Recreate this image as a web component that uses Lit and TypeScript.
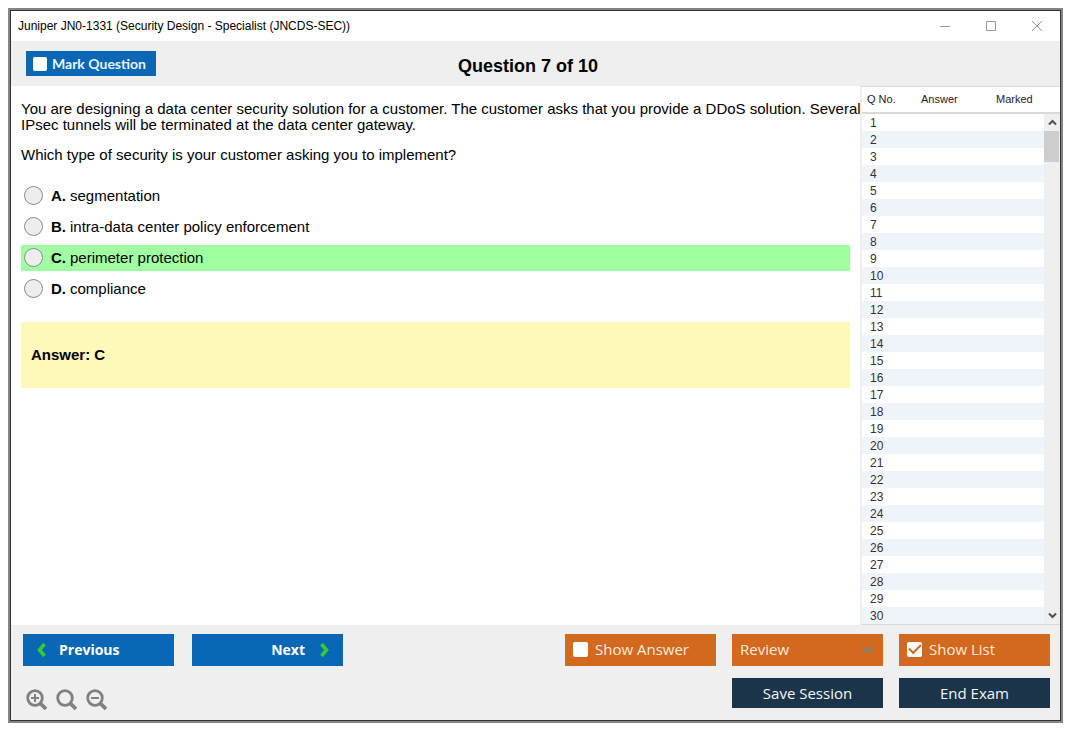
import { LitElement, html, css, svg } from "lit";
import { customElement, property, state } from "lit/decorators.js";

interface Choice {
  letter: string;
  text: string;
}

const CHOICES: Choice[] = [
  { letter: "A", text: "segmentation" },
  { letter: "B", text: "intra-data center policy enforcement" },
  { letter: "C", text: "perimeter protection" },
  { letter: "D", text: "compliance" },
];

@customElement("question-list")
class QuestionList extends LitElement {
  @property({ type: Number }) count = 30;

  static styles = css`
    :host {
      display: flex;
      flex-direction: column;
      box-sizing: border-box;
      min-height: 0;
      overflow: hidden;
      background: #fff;
      border-left: 2px solid #efefef;
      border-top: 1px solid #d9d9d9;
      border-bottom: 1px solid #d9d9d9;
      font: 12px/15px "Liberation Sans", Arial, sans-serif;
      color: #333;
    }
    .body {
      display: flex;
      flex: 1;
      min-height: 0;
    }
    .rows {
      flex: 1;
      overflow: hidden;
    }
    table {
      width: 100%;
      border-collapse: separate;
      border-spacing: 0;
      table-layout: fixed;
    }
    .q {
      width: 49px;
    }
    .a {
      width: 70px;
    }
    th {
      height: 25px;
      padding: 0 0 0 5px;
      font-size: 11px;
      font-weight: 400;
      text-align: left;
      color: #222;
      border-bottom: 2px solid #d9d9d9;
    }
    td {
      padding: 2px 0 0 8px;
      height: 15px;
    }
    tbody tr:nth-child(even) {
      background: #eef4f9;
    }
    .scroll {
      display: flex;
      flex-direction: column;
      width: 16px;
      margin-top: 25px;
      border-top: 2px solid #d9d9d9;
      background: #efefef;
    }
    .arrow {
      display: grid;
      place-items: center;
      height: 17px;
      padding: 0;
      border: 0;
      background: none;
    }
    .thumb {
      height: 31px;
      margin-right: 1px;
      background: #cdcdcd;
    }
    .track {
      flex: 1;
    }
  `;

  render() {
    const rows = Array.from({ length: this.count }, (_, i) => i + 1);
    return html`
      <div class="body">
        <div class="rows">
          <table>
            <thead>
              <tr>
                <th class="q" scope="col">Q No.</th>
                <th class="a" scope="col">Answer</th>
                <th scope="col">Marked</th>
              </tr>
            </thead>
            <tbody>
              ${rows.map((n) => html`<tr><td>${n}</td><td></td><td></td></tr>`)}
            </tbody>
          </table>
        </div>
        <div class="scroll">
          <button class="arrow" aria-label="Scroll up">
            <svg width="9" height="7" viewBox="0 0 9 7" fill="none" stroke="#505050" stroke-width="2"><path d="M1 5.5 4.5 2 8 5.5" /></svg>
          </button>
          <div class="thumb"></div>
          <div class="track"></div>
          <button class="arrow" aria-label="Scroll down">
            <svg width="9" height="7" viewBox="0 0 9 7" fill="none" stroke="#505050" stroke-width="2"><path d="M1 1.5 4.5 5 8 1.5" /></svg>
          </button>
        </div>
      </div>
    `;
  }
}

@customElement("app-root")
class AppRoot extends LitElement {
  @state() private showList = true;
  @state() private answer = "C";

  static styles = css`
    :host {
      display: block;
      box-sizing: border-box;
      height: 100vh;
      padding: 8px 12px 12px 8px;
      background: #fff;
      color: #000;
      font-family: "Liberation Sans", Arial, sans-serif;
    }
    * {
      box-sizing: border-box;
    }
    .frame {
      height: 100%;
      border: 2px solid #858585;
    }
    .window {
      display: flex;
      flex-direction: column;
      height: 100%;
      border: 1px solid #333;
      background: #fff;
    }
    .titlebar {
      display: flex;
      align-items: center;
      justify-content: space-between;
      height: 30px;
      padding: 0 17px 0 7px;
      font-size: 12px;
      line-height: 16px;
    }
    .controls {
      display: flex;
      gap: 34px;
    }
    .control {
      display: block;
      padding: 0;
      border: 0;
      background: none;
      line-height: 0;
    }
    .header {
      display: grid;
      grid-template-columns: 1fr auto 1fr;
      align-items: center;
      height: 45px;
      padding: 0 30px 0 15px;
      background: #efefef;
    }
    h1 {
      margin: 0;
      padding-top: 4px;
      font-size: 18px;
      line-height: 22px;
    }
    .check {
      display: flex;
      align-items: center;
      gap: 7px;
      padding: 0 0 2px 8px;
    }
    .check input {
      appearance: none;
      display: grid;
      place-items: center;
      width: 15px;
      height: 15px;
      margin: 0;
      border-radius: 2px;
      background: #fff;
    }
    .check input:checked::after {
      content: "";
      width: 10px;
      height: 5px;
      margin-bottom: 3px;
      border: solid #d2691e;
      border-width: 0 0 2px 2px;
      transform: rotate(-45deg);
    }
    .mark {
      justify-self: start;
      width: 130px;
      height: 25px;
      gap: 5px;
      padding: 0 0 0 7px;
      background: #0a67b5;
      color: #e8f1fa;
      font: 700 14px/20px Lato, sans-serif;
    }
    .mark input {
      width: 14px;
      height: 14px;
    }
    .main {
      display: grid;
      grid-template-columns: minmax(0, 1fr) 200px;
      flex: 1;
      min-height: 0;
    }
    .main.wide {
      grid-template-columns: minmax(0, 1fr);
    }
    .question {
      padding: 15px 0 0 10px;
      font-size: 15px;
      line-height: 16px;
    }
    p {
      margin: 0 -2px 14px 0;
    }
    .choices {
      display: grid;
      gap: 5px;
      margin: 20px 10px 0 0;
      padding: 0;
      border: 0;
    }
    .choice {
      display: flex;
      align-items: center;
      height: 26px;
      padding-left: 3px;
    }
    .choice.correct {
      background: #a0ffa0;
    }
    .choice input {
      appearance: none;
      width: 19px;
      height: 19px;
      margin: 0 8px 1px 0;
      border: 1px solid #8a8a8a;
      border-radius: 50%;
      background: #ededed;
    }
    .choice input:checked {
      background: radial-gradient(#333 4px, #ededed 5px);
    }
    .choice b {
      margin-right: 4px;
    }
    .answer {
      margin: 20px 10px 0 0;
      padding: 25px 10px;
      background: #fef8b9;
      font-weight: 700;
    }
    .footer {
      display: flex;
      justify-content: space-between;
      padding: 9px 10px 12px 12px;
      background: #efefef;
    }
    .nav,
    .actions {
      display: grid;
      grid-template-rows: 32px 30px;
      row-gap: 12px;
    }
    .nav {
      grid-template-columns: 151px 151px;
      column-gap: 18px;
    }
    .actions {
      grid-template-columns: repeat(3, 151px);
      column-gap: 16px;
    }
    .btn {
      border: 0;
      font: 400 15px/20px "Open Sans", sans-serif;
      color: #fbe9dc;
    }
    .blue {
      display: flex;
      align-items: center;
      gap: 13px;
      padding: 0 14px;
      background: #0a67b5;
      color: #fff;
      font-size: 14px;
      font-weight: 700;
    }
    .next {
      justify-content: flex-end;
      gap: 15px;
    }
    .orange {
      background: #d2691e;
    }
    .review {
      display: flex;
      align-items: center;
      justify-content: space-between;
      padding: 0 9px 2px 8px;
    }
    .navy {
      padding: 0;
      background: #1b344a;
      color: #f4f6f8;
    }
    .save {
      grid-column: 2;
    }
    .zoom {
      display: flex;
      align-items: center;
      gap: 8px;
      padding: 14px 0 0 3px;
    }
  `;

  private magnifier(label: string, mark: unknown) {
    return html`
      <button class="control" aria-label=${label}>
        <svg width="22" height="22" viewBox="0 0 22 22" fill="none" stroke="#808080">
          <circle cx="9" cy="9" r="7.3" stroke-width="2.8" />
          <path d="M14.3 14.3 20 20" stroke-width="3.8" />
          ${mark}
        </svg>
      </button>
    `;
  }

  render() {
    return html`
      <div class="frame">
        <div class="window">
          <div class="titlebar">
            <span>Juniper JN0-1331 (Security Design - Specialist (JNCDS-SEC))</span>
            <div class="controls">
              <button class="control" aria-label="Minimize">
                <svg width="12" height="12" stroke="#999" fill="none"><path d="M1 6.5h10" /></svg>
              </button>
              <button class="control" aria-label="Maximize">
                <svg width="12" height="12" stroke="#999" fill="none"><path d="M1.500 1.500h9v9h-9z" /></svg>
              </button>
              <button class="control" aria-label="Close">
                <svg width="12" height="12" stroke="#999" fill="none"><path d="m1 1 10 10M11 1 1 11" /></svg>
              </button>
            </div>
          </div>

          <div class="header">
            <label class="check mark"><input type="checkbox" />Mark Question</label>
            <h1>Question 7 of 10</h1>
          </div>

          <div class="main ${this.showList ? "" : "wide"}">
            <div class="question">
              <p>
                You are designing a data center security solution for a customer. The customer asks that you provide a
                DDoS solution. Several IPsec tunnels will be terminated at the data center gateway.
              </p>
              <p>Which type of security is your customer asking you to implement?</p>
              <fieldset class="choices" aria-label="Choices">
                ${CHOICES.map(
                  (c) => html`
                    <label class="choice ${c.letter === this.answer ? "correct" : ""}">
                      <input type="radio" name="choice" value=${c.letter} /><b>${c.letter}.</b>${c.text}
                    </label>
                  `,
                )}
              </fieldset>
              <div class="answer">Answer: ${this.answer}</div>
            </div>
            ${this.showList ? html`<question-list .count=${30}></question-list>` : ""}
          </div>

          <div class="footer">
            <div class="nav">
              <button class="btn blue">
                <svg width="9" height="14" viewBox="0 0 9 14" fill="none" stroke="#32cd32" stroke-width="3.6"><path d="M7.500 1 2.500 7l5 6" /></svg>
                Previous
              </button>
              <button class="btn blue next">
                Next
                <svg width="9" height="14" viewBox="0 0 9 14" fill="none" stroke="#32cd32" stroke-width="3.6"><path d="M1.500 1l5 6-5 6" /></svg>
              </button>
              <div class="zoom">
                ${this.magnifier("Zoom in", svg`<path d="M5 9h8M9 5v8" stroke-width="2" />`)}
                ${this.magnifier("Reset zoom", "")}
                ${this.magnifier("Zoom out", svg`<path d="M5 9h8" stroke-width="2" />`)}
              </div>
            </div>
            <div class="actions">
              <label class="btn orange check"><input type="checkbox" />Show Answer</label>
              <button class="btn orange review" aria-haspopup="menu">
                Review
                <svg width="12" height="6" viewBox="0 0 12 6"><path d="M0 6 6 0l6 6z" fill="#8a7f74" /></svg>
              </button>
              <label class="btn orange check">
                <input
                  type="checkbox"
                  .checked=${this.showList}
                  @change=${(e: Event) => (this.showList = (e.target as HTMLInputElement).checked)}
                />Show List
              </label>
              <button class="btn navy save">Save Session</button>
              <button class="btn navy">End Exam</button>
            </div>
          </div>
        </div>
      </div>
    `;
  }
}
